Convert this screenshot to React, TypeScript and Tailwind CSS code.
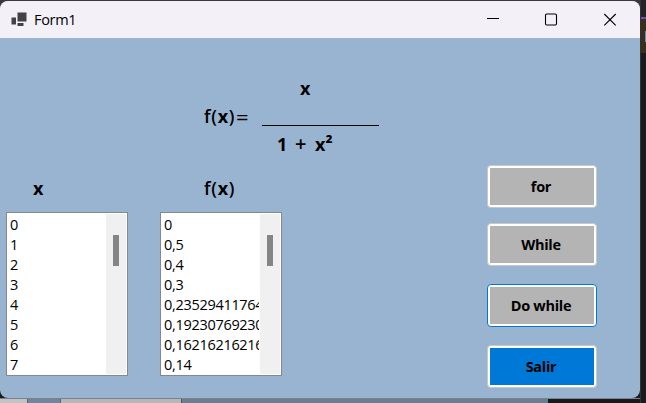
import React from "react";

const xs = ["0", "1", "2", "3", "4", "5", "6", "7"];
const ys = ["0", "0,5", "0,4", "0,3", "0,23529411764", "0,19230769230", "0,16216216216", "0,14"];

function ListBox({ items }: { items: string[] }) {
  return (
    <div className="flex h-[164px] w-[122px] border border-[#828790] bg-white p-px">
      <div className="mr-px h-full w-[97px] overflow-hidden pl-[2px] pt-px text-[14.5px] tracking-[-0.3px]">
        {items.map((item) => (
          <div key={item} className="h-5 whitespace-nowrap leading-5">{item}</div>
        ))}
      </div>
      <div className="h-full w-5 bg-[#f0f0f0] pl-[7px] pt-[21px]">
        <div className="h-[31px] w-1.5 bg-[#858585]" />
      </div>
    </div>
  );
}

function FormButton({ label, look }: { label: string; look: string }) {
  return (
    <button className={"flex h-[43px] w-[110px] rounded-[4px] border bg-white p-[2px] " + look}>
      <span className="flex h-full w-full items-center justify-center pr-[2px] text-[14.5px] font-bold leading-5 tracking-[-0.3px]">
        {label}
      </span>
    </button>
  );
}

export default function App() {
  return (
    <div className="flex h-[403px] w-[646px] overflow-hidden bg-[#1b1b1c] font-['Open_Sans','Noto_Sans',sans-serif] text-black">
      <div className="flex h-[403px] w-[640px] shrink-0 flex-col bg-[linear-gradient(#3b383c_0_350px,transparent_350px)]">
        <div className="mt-px flex h-[397px] w-[640px] shrink-0 flex-col overflow-hidden rounded-[8px] bg-[#99b4d1]">
          <header className="flex h-[37px] shrink-0 items-center bg-[#f3f0f8]">
            <svg className="ml-[11px] h-4 w-4" viewBox="0 0 16 16" fill="#424144">
              <path d="M0.5 5.5H5V12.5H.5zM6.5 .5H15.5V9.5H6.5zM6.5 11H12.5V14H6.5z" />
            </svg>
            <span className="ml-[7px] w-[425px] text-[14.5px] leading-5 tracking-[-0.3px]">Form1</span>
            <svg className="ml-[28px] h-[13px] w-[132px]" viewBox="0 0 132 13" fill="none" stroke="#000" strokeWidth="1.1">
              <path d="M0 5.5H12" />
              <rect x="58.5" y="1" width="11" height="11" rx="1.2" />
              <path d="M117.3 1L128.7 12.3M128.7 1L117.3 12.3" />
            </svg>
          </header>
          <main className="flex min-h-0 flex-1">
            <section className="flex w-[487px] flex-col">
              <div className="flex h-[138px] pl-[204px] pt-[38px] text-[18px] font-semibold leading-6">
                <div className="flex w-[58px] whitespace-nowrap pt-[28px] tracking-[0.7px]">
                  <span className="w-8">f(<span className="font-bold">x</span>)</span>
                  <span className="text-[22px] font-normal">=</span>
                </div>
                <div className="flex w-[117px] flex-col">
                  <div className="h-[50px] border-b border-black pl-[38px] font-bold">x</div>
                  <div className="flex whitespace-nowrap pl-[15px] pt-[6px]">
                    <span className="w-[18px] font-bold">1</span>
                    <span className="w-5 text-[20px]">+</span>
                    <span className="font-bold">x<span className="text-[19px]">²</span></span>
                  </div>
                </div>
              </div>
              <div className="flex h-9 text-[18px] font-bold leading-6">
                <div className="w-[204px] pl-[33px]">x</div>
                <div className="font-semibold tracking-[0.7px]">f(<span className="font-bold">x</span>)</div>
              </div>
              <div className="flex gap-8 pl-1.5">
                <ListBox items={xs} />
                <ListBox items={ys} />
              </div>
            </section>
            <aside className="flex flex-col pt-[127px]">
              <FormButton label="for" look="border-[#c8c8c8] [&>span]:bg-[#b4b4b4]" />
              <div className="h-[15px]" />
              <FormButton label="While" look="border-[#c8c8c8] [&>span]:bg-[#b4b4b4]" />
              <div className="h-[18px]" />
              <FormButton label="Do while" look="border-[#0078d7] [&>span]:bg-[#b4b4b4]" />
              <div className="h-[18px]" />
              <FormButton label="Salir" look="border-[#c8c8c8] [&>span]:bg-[#0078d7]" />
            </aside>
          </main>
        </div>
        <footer className="flex h-[5px] w-[640px] border-t border-[#7b8289]">
          <div className="w-[27px] bg-[#c3c3c3]" />
          <div className="w-[34px] border-x border-[#5b6470] bg-[#70859f]" />
          <div className="w-[120px] bg-[#b7b7b7]" />
          <div className="w-[366px] border-l border-[#555] bg-[#6b7d92]" />
          <div className="w-px bg-[#269aa8]" />
          <div className="flex-1 bg-[#19191a]" />
        </footer>
      </div>
      <div className="flex w-1.5 flex-col border-l border-[#333136]">
        <div className="h-[17px] bg-[#242325]" />
        <div className="h-[2px] bg-[#6750b8]" />
        <div className="flex h-[34px] justify-end bg-[#3b2f19] pt-3">
          <div className="h-[11px] w-px bg-[#5c91c8]" />
        </div>
      </div>
    </div>
  );
}
